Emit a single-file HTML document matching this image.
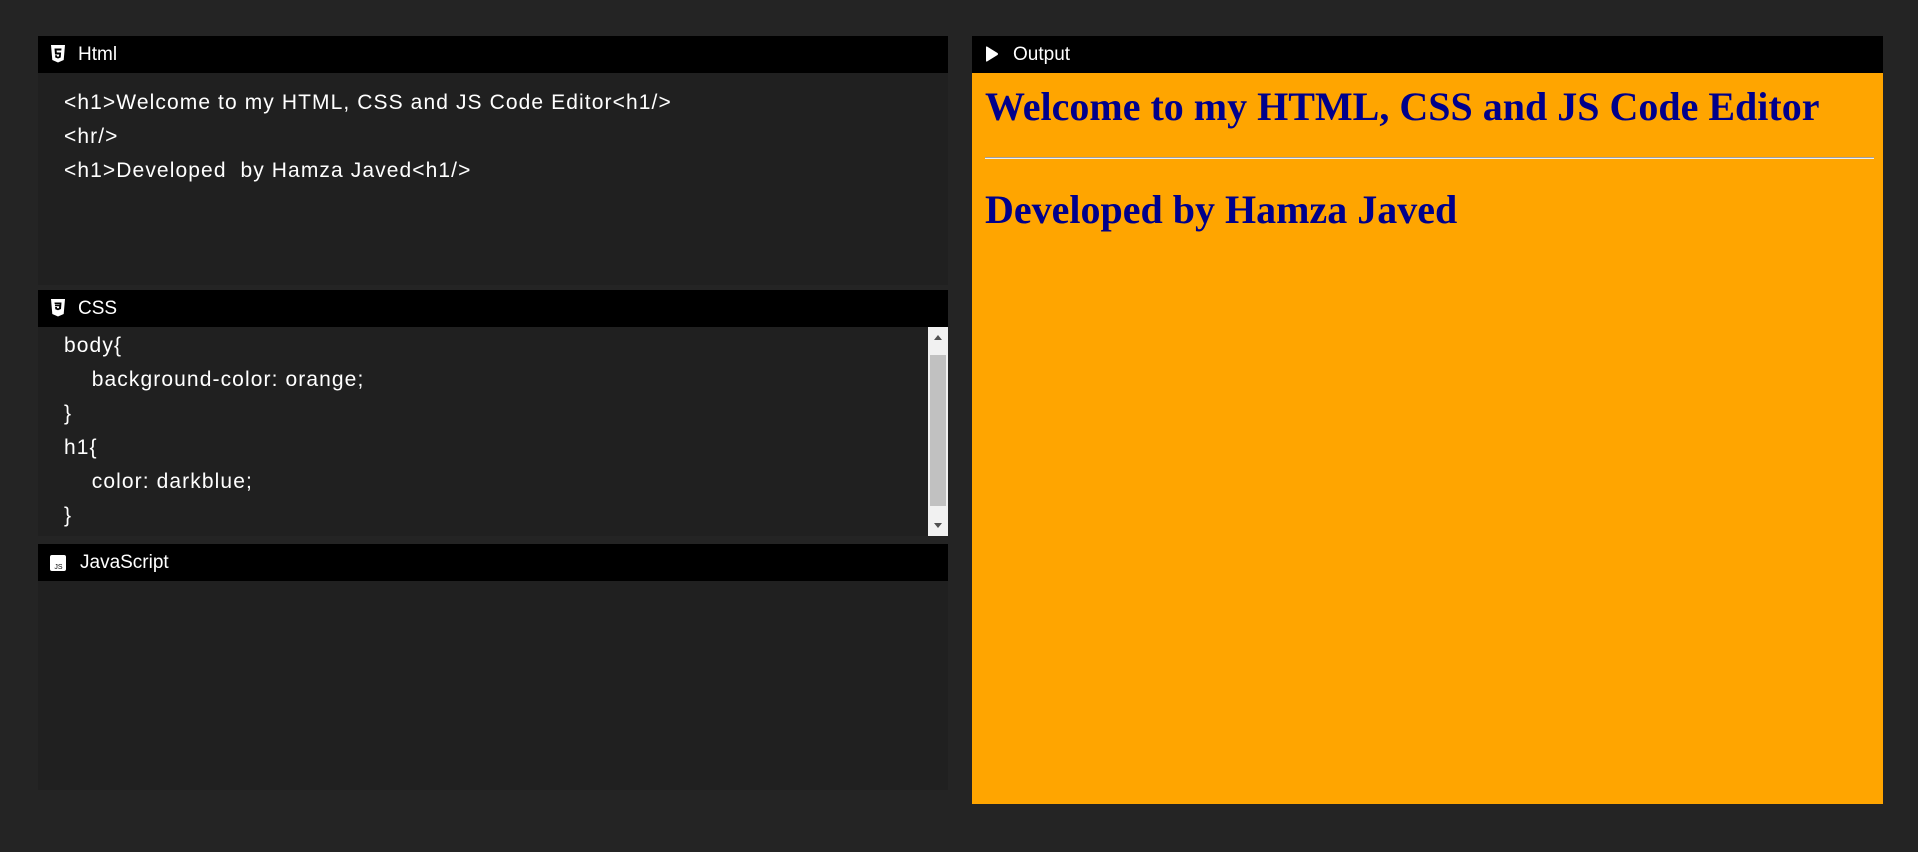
<!DOCTYPE html>
<html><head><meta charset="utf-8"><style>
*{margin:0;padding:0;box-sizing:border-box}
body{width:1918px;height:852px;background:#242424;position:relative;overflow:hidden;font-family:"Liberation Sans",sans-serif;color:#fff}
.hd{position:absolute;background:#000;height:37px;font-size:19px;line-height:37px}
.hd span{position:absolute;left:40px;top:0}
.hd svg{position:absolute;left:12px;top:9px}
.bd{position:absolute;background:#202020}
.code{position:absolute;font-size:21px;letter-spacing:1.1px;white-space:pre;line-height:34px}
</style></head><body>
<div class="hd" style="left:38px;top:36px;width:910px"><svg width="16" height="18" viewBox="0 0 16 18"><path d="M1 0h14l-1.3 15L8 17.5 2.3 15z" fill="#fff"/><path d="M4.5 3.5h7l-.2 2H6.6l.2 2h4.3l-.4 5L8 13.5l-2.7-1-.2-2.2h1.8l.1 1 1 .4 1-.4.2-1.8H5z" fill="#000"/></svg><span>Html</span></div>
<div class="bd" style="left:38px;top:73px;width:910px;height:212px"></div>
<div class="code" style="left:64px;top:86px">&lt;h1&gt;Welcome to my HTML, CSS and JS Code Editor&lt;h1/&gt;
&lt;hr/&gt;
&lt;h1&gt;Developed  by Hamza Javed&lt;h1/&gt;</div>

<div class="hd" style="left:38px;top:290px;width:910px"><svg width="16" height="18" viewBox="0 0 16 18"><path d="M1 0h14l-1.3 15L8 17.5 2.3 15z" fill="#fff"/><path d="M4.5 3.5h7l-.5 6.5-3 1.2-2.7-1-.2-2.2h1.8l.1 1 1 .4 1-.4.2-1.8H5l-.1-1.7h4.7l.1-.5H4.7z" fill="#000"/></svg><span>CSS</span></div>
<div class="bd" style="left:38px;top:327px;width:910px;height:209px"></div>
<div class="code" style="left:64px;top:329px">body{
    background-color: orange;
}
h1{
    color: darkblue;
}</div>
<div style="position:absolute;left:928px;top:327px;width:20px;height:209px;background:#f1f1f1">
<div style="position:absolute;left:2px;top:28px;width:16px;height:151px;background:#c1c1c1"></div>
<div style="position:absolute;left:6px;top:8px;border:4px solid transparent;border-bottom:5px solid #505050;border-top:0"></div>
<div style="position:absolute;left:6px;bottom:8px;border:4px solid transparent;border-top:5px solid #505050;border-bottom:0"></div>
</div>

<div class="hd" style="left:38px;top:544px;width:910px"><svg width="16" height="16" viewBox="0 0 16 16" style="top:11px"><rect width="16" height="16" rx="2" fill="#fff"/><text x="8.5" y="14" font-size="7" font-family="Liberation Sans" fill="#000" text-anchor="middle">JS</text></svg><span style="left:42px">JavaScript</span></div>
<div class="bd" style="left:38px;top:581px;width:910px;height:209px"></div>

<div class="hd" style="left:972px;top:36px;width:911px"><svg width="14" height="18" viewBox="0 0 14 18" style="left:13px;top:9px"><path d="M2 1.5Q1 1 1 2.5v13q0 1.5 1 1l10.5-6.5q1-1 0-2z" fill="#fff"/></svg><span style="left:41px">Output</span></div>
<div style="position:absolute;left:972px;top:73px;width:911px;height:731px;background:orange;font-family:'Liberation Serif',serif;color:darkblue">
<div style="position:absolute;left:13px;top:10px;font-size:40px;font-weight:bold;white-space:nowrap">Welcome to my HTML, CSS and JS Code Editor</div>
<div style="position:absolute;left:13px;right:9px;top:84px;height:2px;border-top:1px solid #a0a0a0;border-bottom:1px solid #eee"></div>
<div style="position:absolute;left:13px;top:113px;font-size:40px;font-weight:bold;white-space:nowrap">Developed by Hamza Javed</div>
</div>
</body></html>
